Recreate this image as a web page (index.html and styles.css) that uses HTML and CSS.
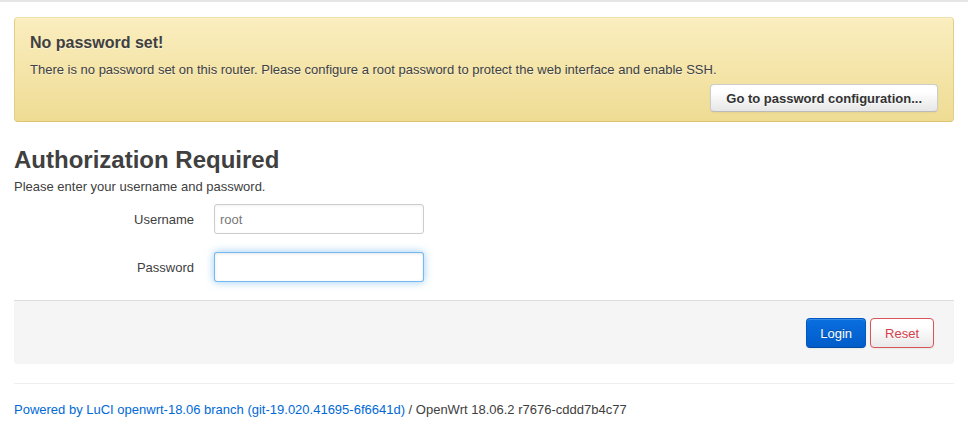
FILE: index.html
```html
<!DOCTYPE html>
<html lang="en">
<head>
<meta charset="utf-8">
<title>Authorization Required</title>
<link rel="stylesheet" href="styles.css">
</head>
<body>
<div class="topbar"></div>
<main class="container">
  <div class="alert">
    <h4 class="alert-title">No password set!</h4>
    <p class="alert-text">There is no password set on this router. Please configure a root password to protect the web interface and enable SSH.</p>
    <div class="alert-actions">
      <button class="btn btn-bold" type="button">Go to password configuration...</button>
    </div>
  </div>

  <h2 class="page-title">Authorization Required</h2>
  <p class="page-desc">Please enter your username and password.</p>

  <div class="fields">
    <div class="field-row">
      <label class="field-label" for="user">Username</label>
      <div class="field-control"><input id="user" class="input" type="text" value="root"></div>
    </div>
    <div class="field-row">
      <label class="field-label" for="pass">Password</label>
      <div class="field-control"><input id="pass" class="input input-focus" type="password"></div>
    </div>
  </div>

  <div class="page-actions">
    <button class="btn btn-primary" type="button">Login</button>
    <button class="btn btn-reset" type="button">Reset</button>
  </div>

  <hr class="rule">

  <footer class="footer">
    <a class="footer-link" href="#">Powered by LuCI openwrt-18.06 branch (git-19.020.41695-6f6641d)</a> / OpenWrt 18.06.2 r7676-cddd7b4c77
  </footer>
</main>
</body>
</html>
```

FILE: styles.css
```css
* { box-sizing: border-box; }
html, body { margin: 0; padding: 0; background: #fff; }
body {
  font-family: "Liberation Sans", Arial, Helvetica, sans-serif;
  font-size: 13px;
  line-height: 18px;
  color: #404040;
}
.topbar { height: 2px; background: #e6e6e6; }
.container { padding: 0 14px; }

.alert {
  margin-top: 15px;
  padding: 15px 15px 9px 15px;
  border: 1px solid #e3cf83;
  border-top-color: #eedfa6;
  border-bottom-color: #dcc470;
  border-radius: 4px;
  background: linear-gradient(#fbeebf, #eedc94);
  text-shadow: 0 1px 0 rgba(255,255,255,0.5);
  box-shadow: inset 0 1px 0 rgba(255,255,255,0.25);
}
.alert-title {
  margin: 0;
  font-size: 16px;
  line-height: 20px;
  font-weight: bold;
  color: #404040;
}
.alert-text { margin: 8px 0 0; }
.alert-actions { margin-top: 5px; display: flex; justify-content: flex-end; }

.btn {
  font-family: inherit;
  font-size: 13px;
  height: 28px;
  padding: 0 14px;
  border: 1px solid #ccc;
  border-bottom-color: #bbb;
  border-radius: 4px;
  color: #333;
  background: linear-gradient(#ffffff 25%, #e6e6e6);
  box-shadow: inset 0 1px 0 rgba(255,255,255,0.2), 0 1px 2px rgba(0,0,0,0.05);
  text-shadow: 0 1px 1px rgba(255,255,255,0.75);
  cursor: pointer;
}
.btn-bold { font-weight: bold; padding: 0 15px; }

.page-title {
  margin: 20px 0 0;
  font-size: 24px;
  line-height: 36px;
  font-weight: bold;
  color: #404040;
}
.page-desc { margin: 0; }

.fields {
  margin-top: 8px;
  display: flex;
  flex-direction: column;
  gap: 18px;
}
.field-row { display: flex; align-items: center; height: 30px; }
.field-label { width: 180px; text-align: right; color: #404040; padding-top: 1px; }
.field-control { margin-left: 20px; }
.input {
  width: 210px;
  height: 30px;
  padding: 4px 5px;
  font-family: inherit;
  font-size: 13px;
  color: #777;
  border: 1px solid #ccc;
  border-radius: 3px;
  background: #fff;
  box-shadow: inset 0 1px 3px rgba(0,0,0,0.06);
  outline: none;
}
.input-focus {
  border-color: rgba(82,168,236,0.8);
  box-shadow: inset 0 1px 3px rgba(0,0,0,0.1), 0 0 8px rgba(82,168,236,0.6);
}

.page-actions {
  margin-top: 18px;
  padding: 17px 20px 16px;
  background: #f5f5f5;
  border-top: 1px solid #ddd;
  border-radius: 0 0 3px 3px;
  display: flex;
  justify-content: flex-end;
  gap: 4px;
}
.page-actions .btn { height: 30px; }
.btn-primary {
  color: #fff;
  background: linear-gradient(#0a6fe0, #005cc9);
  border: 1px solid #0059c2;
  border-bottom-color: #004aa3;
  text-shadow: 0 -1px 0 rgba(0,0,0,0.25);
  padding: 0 13px;
}
.btn-reset {
  color: #d6404b;
  border: 1px solid #d9535a;
  background: linear-gradient(#ffffff 25%, #e9e9e9);
  padding: 0 14px;
}

.rule {
  margin: 19px 0 0;
  border: 0;
  border-top: 1px solid #eee;
  height: 0;
}
.footer { margin-top: 17px; }
.footer-link { color: #0069d6; text-decoration: none; }
```
